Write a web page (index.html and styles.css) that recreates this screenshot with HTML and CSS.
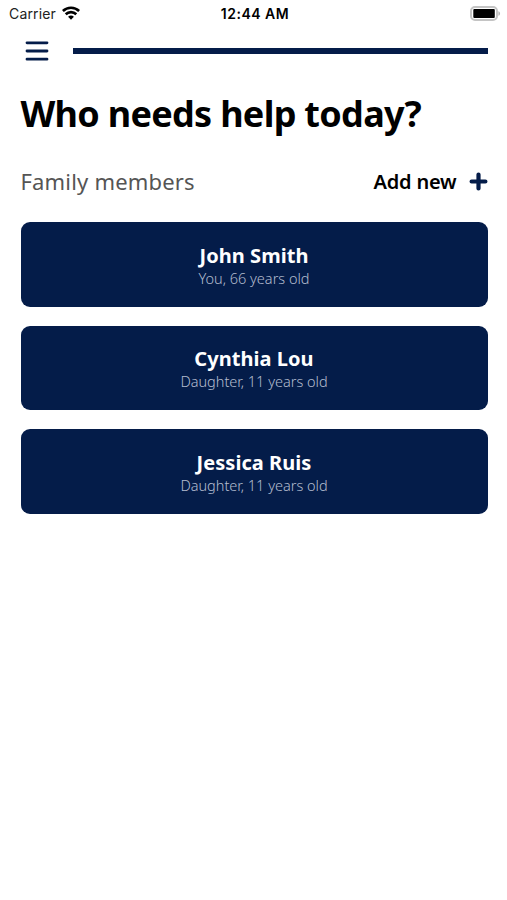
FILE: index.html
```html
<!DOCTYPE html>
<html lang="en">
<head>
    <meta charset="UTF-8">
    <meta name="viewport" content="width=device-width, initial-scale=1.0">
    <title>Family Members</title>
    <link rel="stylesheet" href="styles.css">
</head>
<body>

    <!-- Status Bar -->
    <div class="status-bar">
        <div class="carrier">
            <span>Carrier</span>
            <svg class="wifi" width="18" height="14" viewBox="0 0 18 14" fill="none" stroke="#000" stroke-width="2.6">
                <path d="M0.9 5C5.4 0.6 12.6 0.6 17.1 5"/>
                <path d="M3.7 8.3C6.7 5.4 11.3 5.4 14.3 8.3"/>
                <path d="M6.1 10.7C7.8 9.1 10.2 9.1 11.9 10.7L9 13.7Z" fill="#000" stroke="none"/>
            </svg>
        </div>
        <span class="time">12:44 AM</span>
        <svg class="battery" width="31" height="15" viewBox="0 0 31 15">
            <rect x="1" y="1" width="26" height="13" rx="4" fill="#fff" stroke="#c4c4c4" stroke-width="2"/>
            <rect x="3.3" y="3" width="21.5" height="9" rx="1" fill="#000"/>
            <path d="M28.4 5.2C30.6 5.8 30.6 9.2 28.4 9.8Z" fill="#b4b4b4"/>
        </svg>
    </div>

    <!-- Top Navigation -->
    <div class="top-nav">
        <button class="menu-btn" aria-label="Menu">
            <svg width="24" height="22" viewBox="0 0 24 22" stroke="#041c49" stroke-width="2.8" stroke-linecap="round">
                <path d="M2 2.8H22M2 11H22M2 19.2H22"/>
            </svg>
        </button>
        <div class="progress"></div>
    </div>

    <!-- Main Content -->
    <div class="main-content">
        <h1>Who needs help today?</h1>

        <div class="section-header">
            <h2>Family members</h2>
            <button class="add-btn">
                <span>Add new</span>
                <svg width="19" height="19" viewBox="0 0 19 19" stroke="#041c49" stroke-width="4.2" stroke-linecap="round">
                    <path d="M9.5 2.6V16.4M2.6 9.5H16.4"/>
                </svg>
            </button>
        </div>

        <div class="member-list">
            <div class="member-card">
                <h3>John Smith</h3>
                <p>You, 66 years old</p>
            </div>
            <div class="member-card">
                <h3>Cynthia Lou</h3>
                <p>Daughter, 11 years old</p>
            </div>
            <div class="member-card">
                <h3>Jessica Ruis</h3>
                <p>Daughter, 11 years old</p>
            </div>
        </div>
    </div>

</body>
</html>
```
FILE: styles.css
```css
* {
    margin: 0;
    padding: 0;
    box-sizing: border-box;
}

body {
    font-family: 'Noto Sans', sans-serif;
    background-color: #fff;
    color: #000;
}

button {
    background: none;
    border: none;
    font-family: inherit;
    cursor: pointer;
}

/* Status Bar */
.status-bar {
    display: grid;
    grid-template-columns: 1fr auto 1fr;
    align-items: center;
    height: 27px;
    padding: 0 6px 0 9px;
    font-family: 'Inter', sans-serif;
    font-size: 14px;
}

.carrier {
    display: flex;
    align-items: center;
    gap: 6px;
    color: #222;
    letter-spacing: 0.15px;
}

.wifi {
    margin-bottom: 2px;
}

.time {
    font-weight: 600;
    letter-spacing: 0.5px;
}

.battery {
    justify-self: end;
    margin-bottom: 1px;
}

/* Top Navigation */
.top-nav {
    display: flex;
    align-items: center;
    gap: 24px;
    height: 47px;
    padding: 0 19.5px 0 25px;
}

.menu-btn svg {
    display: block;
}

.menu-btn {
    width: 24px;
}

.progress {
    flex: 1;
    height: 6px;
    background-color: #041c49;
}

/* Main Content */
.main-content {
    padding: 15px 19.5px 0 20.5px;
}

h1 {
    font-size: 36px;
    font-weight: 700;
    line-height: 50px;
    letter-spacing: -0.7px;
    white-space: nowrap;
}

.section-header {
    display: flex;
    justify-content: space-between;
    align-items: center;
    height: 30px;
    margin-top: 27px;
}

h2 {
    font-size: 22px;
    font-weight: 400;
    letter-spacing: 0.18px;
    color: #555;
}

.add-btn {
    display: flex;
    align-items: center;
    gap: 12px;
    font-size: 20px;
    font-weight: 600;
    letter-spacing: -0.2px;
    color: #000;
}

/* Member Cards */
.member-list {
    display: flex;
    flex-direction: column;
    gap: 19px;
    margin-top: 26px;
}

.member-card {
    height: 84.5px;
    padding-top: 20.5px;
    border-radius: 9px;
    background-color: #041c49;
    text-align: center;
}

.member-card h3 {
    font-size: 20px;
    font-weight: 700;
    line-height: 26px;
    letter-spacing: 0.05px;
    color: #fff;
}

.member-card p {
    font-size: 14.5px;
    font-weight: 300;
    line-height: 18px;
    color: #b4bdcf;
}
```
